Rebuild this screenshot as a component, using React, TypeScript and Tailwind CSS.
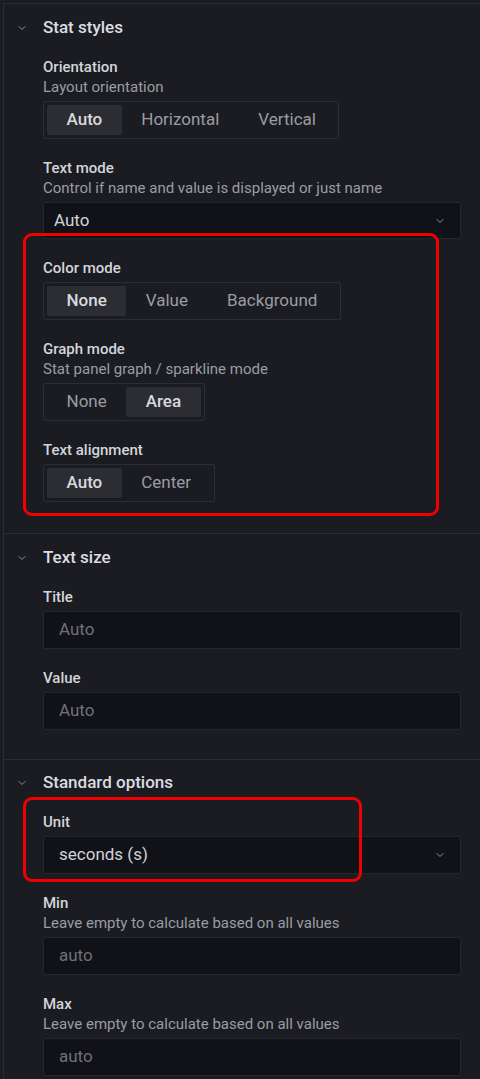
import { ChevronDown } from "lucide-react";

const font = { fontFamily: "Roboto, 'Liberation Sans', sans-serif" };

function Header({ title }: { title: string }) {
  return (
    <div className="flex h-[44px] items-center pt-[3px]">
      <div className="flex w-[39px] justify-center pr-[3px]">
        <ChevronDown size={12} strokeWidth={2} className="text-[#8e9097]" />
      </div>
      <span className="text-[17px] font-medium text-[#dcdde2]">{title}</span>
    </div>
  );
}

function Field({
  label,
  desc,
  children,
}: {
  label: string;
  desc?: string;
  children: React.ReactNode;
}) {
  return (
    <div className="flex flex-col">
      <div className="text-[15px] font-medium leading-[20px] text-[#d4d5da]">{label}</div>
      {desc && <div className="text-[15px] leading-[20px] text-[#9a9ca3]">{desc}</div>}
      <div className="mt-[4px]">{children}</div>
    </div>
  );
}

function Radio({ options, active }: { options: string[]; active: string }) {
  return (
    <div className="inline-flex h-[38px] items-stretch rounded-[2px] border border-[#2c2e34] p-[3px]">
      {options.map((o) => (
        <div
          key={o}
          className={
            o === active
              ? "flex items-center rounded-[2px] bg-[#2c2d33] px-[19.5px] text-[17px] font-medium text-[#d8d9de]"
              : "flex items-center px-[19.5px] text-[17px] text-[#9a9ca3]"
          }
        >
          {o}
        </div>
      ))}
    </div>
  );
}

function Select({ value, bright }: { value: string; bright?: boolean }) {
  return (
    <div
      className={
        bright
          ? "flex h-[38px] items-center justify-between rounded-[2px] border border-[#25272c] bg-[#111217] pr-[14px]"
          : "flex h-[37px] items-center justify-between rounded-[2px] border border-[#25272c] bg-[#111217] pr-[14px]"
      }
    >
      <span className={bright ? "pl-[15px] text-[17px] text-[#d2d3d8]" : "pl-[10px] text-[17px] text-[#d2d3d8]"}>
        {value}
      </span>
      <ChevronDown size={12} strokeWidth={2} className="text-[#8e9097]" />
    </div>
  );
}

function Input({ placeholder }: { placeholder: string }) {
  return (
    <div className="flex h-[38px] items-center rounded-[2px] border border-[#25272c] bg-[#111217] pl-[15px]">
      <span className="text-[17px] text-[#6f7178]">{placeholder}</span>
    </div>
  );
}

export default function App() {
  return (
    <div className="relative h-[1079px] w-[480px] overflow-hidden bg-[#1a1c21]" style={font}>
      <div className="ml-[3px] mt-[3px] h-full border-l border-t border-[#2a2c31]">
        {/* Stat styles */}
        <div className="border-b border-[#2a2c31] pb-[31px]">
          <Header title="Stat styles" />
          <div className="flex flex-col gap-[19px] pl-[39px] pr-[19px] pt-[9px]">
            <Field label="Orientation" desc="Layout orientation">
              <Radio options={["Auto", "Horizontal", "Vertical"]} active="Auto" />
            </Field>
            <Field label="Text mode" desc="Control if name and value is displayed or just name">
              <Select value="Auto" />
            </Field>
            <Field label="Color mode">
              <Radio options={["None", "Value", "Background"]} active="None" />
            </Field>
            <Field label="Graph mode" desc="Stat panel graph / sparkline mode">
              <Radio options={["None", "Area"]} active="Area" />
            </Field>
            <Field label="Text alignment">
              <Radio options={["Auto", "Center"]} active="Auto" />
            </Field>
          </div>
        </div>

        {/* Text size */}
        <div className="border-b border-[#2a2c31] pb-[29px]">
          <Header title="Text size" />
          <div className="flex flex-col gap-[19px] pl-[39px] pr-[19px] pt-[9px]">
            <Field label="Title">
              <Input placeholder="Auto" />
            </Field>
            <Field label="Value">
              <Input placeholder="Auto" />
            </Field>
          </div>
        </div>

        {/* Standard options */}
        <div>
          <div className="-mt-[1px]">
            <Header title="Standard options" />
          </div>
          <div className="flex flex-col gap-[19px] pl-[39px] pr-[19px] pt-[9px]">
            <Field label="Unit">
              <Select value="seconds (s)" bright />
            </Field>
            <Field label="Min" desc="Leave empty to calculate based on all values">
              <Input placeholder="auto" />
            </Field>
            <Field label="Max" desc="Leave empty to calculate based on all values">
              <Input placeholder="auto" />
            </Field>
          </div>
        </div>
      </div>

      {/* annotation boxes */}
      <div className="pointer-events-none absolute left-[23px] top-[233px] h-[283px] w-[416px] rounded-[9px] border-[3px] border-[#f00000]" />
      <div className="pointer-events-none absolute left-[23px] top-[797px] h-[85px] w-[339px] rounded-[9px] border-[3px] border-[#f00000]" />
    </div>
  );
}
